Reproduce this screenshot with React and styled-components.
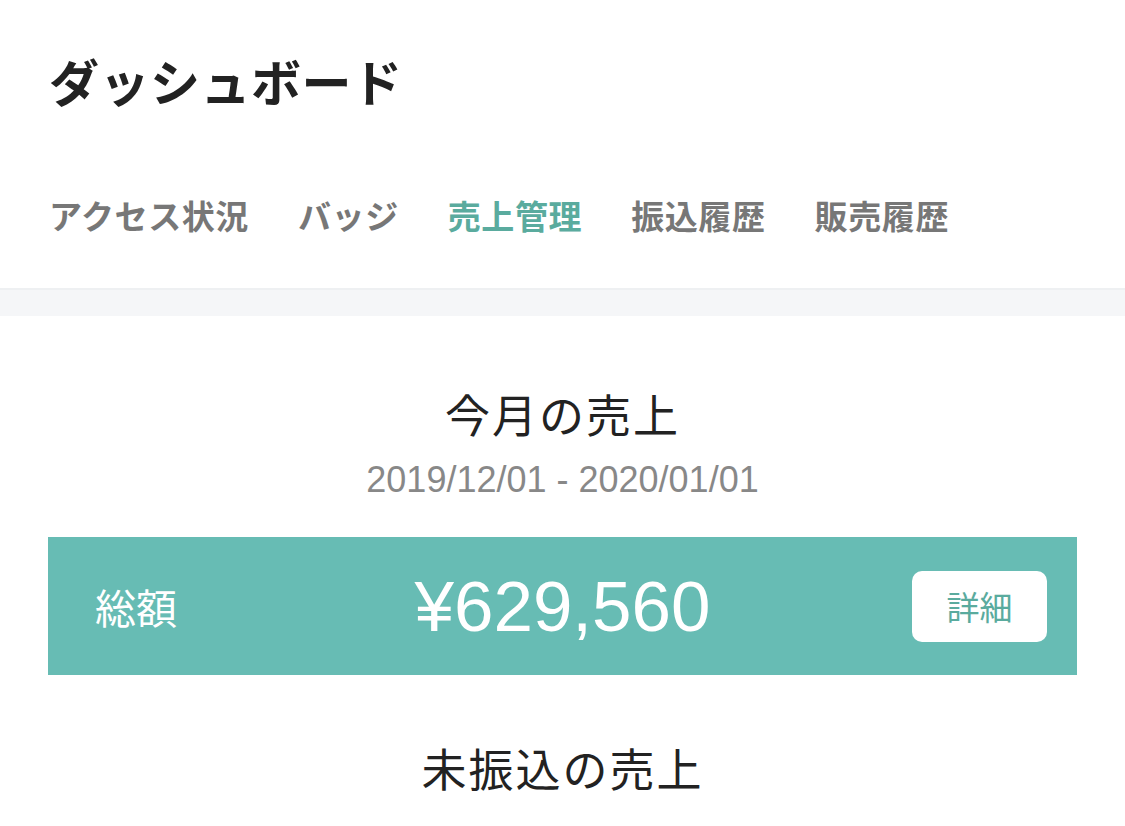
import React from 'react';
import styled, { createGlobalStyle } from 'styled-components';

const GlobalStyle = createGlobalStyle`
  body {
    margin: 0;
    background: #fff;
    font-family: "Liberation Sans", "Noto Sans CJK JP", sans-serif;
    color: #222;
  }
`;

const Page = styled.div`
  width: 1125px;
  height: 826px;
  overflow: hidden;
  display: flex;
  flex-direction: column;
`;

const Header = styled.header`
  padding: 52px 48px 0 49px;
`;

const Title = styled.h1`
  margin: 0;
  font-size: 50px;
  line-height: 66px;
  font-weight: 700;
  color: #222;
  letter-spacing: 0.5px;
`;

const Tabs = styled.nav`
  display: flex;
  gap: 49px;
  margin-top: 80px;
  padding-bottom: 50px;
`;

const Tab = styled.span`
  font-size: 33px;
  line-height: 40px;
  font-weight: 700;
  letter-spacing: 0.6px;
  color: ${p => (p.$active ? '#5aab9e' : '#777')};
`;

const Band = styled.div`
  height: 26px;
  background: #f5f6f8;
  border-top: 2px solid #eef0f2;
`;

const Section = styled.section`
  display: flex;
  flex-direction: column;
  align-items: center;
  padding: 0 48px;
`;

const SectionTitle = styled.h2`
  margin: ${p => p.$top}px 0 0;
  font-size: 45px;
  line-height: 56px;
  font-weight: 400;
  color: #222;
  letter-spacing: 2px;
`;

const Period = styled.div`
  margin-top: 14px;
  font-size: 36px;
  line-height: 40px;
  color: #888;
`;

const TotalBar = styled.div`
  align-self: stretch;
  margin-top: 37px;
  height: 138px;
  background: #67bcb4;
  display: grid;
  grid-template-columns: 1fr auto 1fr;
  align-items: center;
  padding: 0 30px;
  color: #fff;
`;

const Label = styled.span`
  margin-left: 17px;
  font-size: 41px;
  font-weight: 400;
`;

const Amount = styled.span`
  font-size: 71px;
  font-weight: 400;
`;

const DetailButton = styled.button`
  justify-self: end;
  width: 135px;
  height: 71px;
  border: none;
  border-radius: 10px;
  background: #fff;
  color: #5aab9e;
  font-family: inherit;
  font-size: 33px;
  cursor: pointer;
`;

const tabs = ['アクセス状況', 'バッジ', '売上管理', '振込履歴', '販売履歴'];

export default function App() {
  return (
    <Page>
      <GlobalStyle />
      <Header>
        <Title>ダッシュボード</Title>
        <Tabs>
          {tabs.map(t => (
            <Tab key={t} $active={t === '売上管理'}>{t}</Tab>
          ))}
        </Tabs>
      </Header>
      <Band />
      <Section>
        <SectionTitle $top={74}>今月の売上</SectionTitle>
        <Period>2019/12/01 - 2020/01/01</Period>
        <TotalBar>
          <Label>総額</Label>
          <Amount>¥629,560</Amount>
          <DetailButton>詳細</DetailButton>
        </TotalBar>
        <SectionTitle $top={69}>未振込の売上</SectionTitle>
      </Section>
    </Page>
  );
}
